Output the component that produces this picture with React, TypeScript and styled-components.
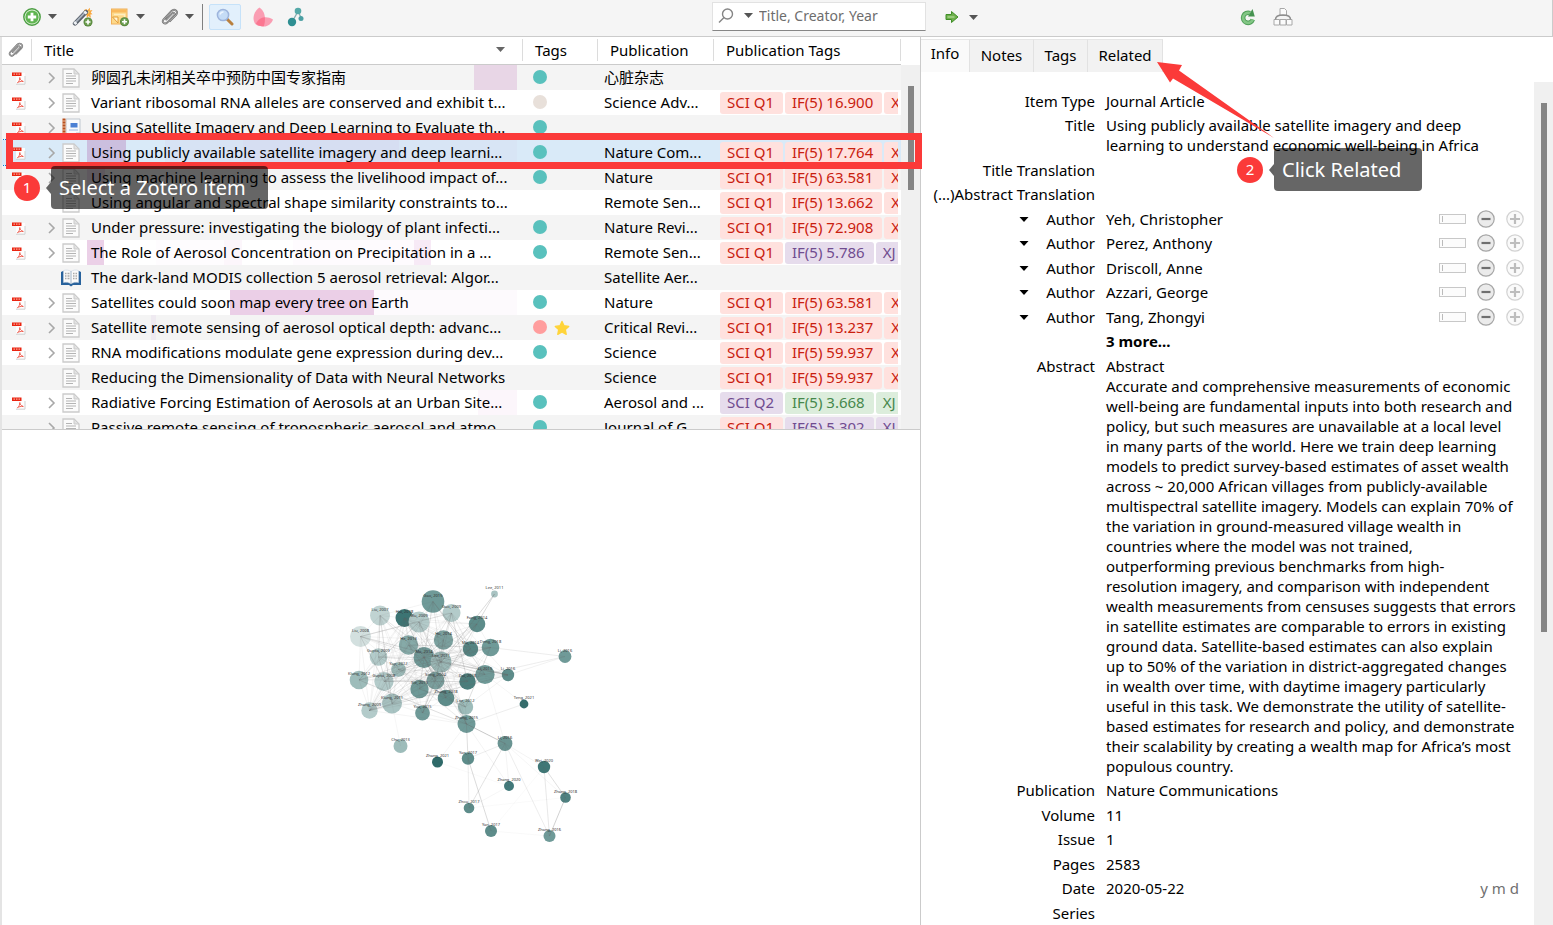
import React from 'react';
import styled, { createGlobalStyle, css } from 'styled-components';

const RED = '#fb3a39';

const Global = createGlobalStyle`
  *, *::before, *::after { box-sizing: border-box; }
  html, body, #root { height: 100%; }
  body {
    margin: 0;
    background: #fff;
    color: #000;
    font-family: "Noto Sans", "Noto Sans CJK SC", sans-serif;
    font-size: 15px;
    line-height: 20px;
  }
  button, input { font: inherit; color: inherit; }
  button { border: 0; padding: 0; background: none; }
  svg { display: block; flex: none; }
`;

/* ---------- page frame ---------- */

const Page = styled.div`
  position: relative;
  display: flex;
  flex-direction: column;
  height: 100vh;
  overflow: hidden;
`;

const Toolbar = styled.header`
  display: grid;
  grid-template-columns: minmax(0, 926fr) minmax(0, 626fr);
  flex: none;
  height: 37px;
  background: #f5f5f5;
  border-bottom: 1px solid #cbcbcb;
  border-right: 1px solid #cbcbcb;
`;

const ItemTools = styled.div`
  display: flex;
  align-items: center;
  padding: 0 0 3px 22px;
`;

const PaneTools = styled.div`
  display: flex;
  align-items: center;
  gap: 10px;
  padding: 0 259px 2px 19px;
`;

const ToolButton = styled.button<{ $gap?: number; $active?: boolean }>`
  display: flex;
  align-items: center;
  gap: 6px;
  margin-right: ${(p) => p.$gap ?? 0}px;
  ${(p) =>
    p.$active &&
    css`
      width: 32px;
      height: 26px;
      justify-content: center;
      background: #e2f0fc;
      border: 1px solid #c6e2f9;
      border-radius: 2px;
    `}
`;

const Divider = styled.span`
  width: 1px;
  height: 26px;
  margin-right: 6px;
  background: #808080;
`;

const SearchBox = styled.label`
  display: flex;
  align-items: center;
  gap: 10px;
  width: 214px;
  height: 29px;
  margin-left: auto;
  padding: 0 5px 2px;
  background: #fff;
  border: 1px solid #e2e2e2;
  border-bottom: 1px solid #868686;
`;

const SearchInput = styled.input`
  flex: 1;
  min-width: 0;
  padding: 0;
  margin-left: -4px;
  border: 0;
  outline: 0;
  background: none;
  font-size: 14px;
  &::placeholder { color: #6d6d6d; opacity: 1; }
`;

const Spacer = styled.span`
  flex: 1;
`;

const Panes = styled.div`
  display: grid;
  grid-template-columns: minmax(0, 921fr) minmax(0, 632fr);
  grid-template-rows: minmax(0, 1fr);
  flex: 1;
  min-height: 0;
`;

const LeftPane = styled.main`
  display: flex;
  flex-direction: column;
  border-left: 2px solid #e4e4e4;
  border-right: 1px solid #cbcbcb;
`;

const RightPane = styled.aside`
  display: flex;
  flex-direction: column;
`;

/* ---------- item list ---------- */

const ListArea = styled.section`
  display: flex;
  flex: none;
  height: 393px;
  overflow: hidden;
  border-bottom: 1px solid #cbcbcb;
`;

const Table = styled.table`
  flex: 1;
  min-width: 0;
  width: 100%;
  height: max-content;
  table-layout: fixed;
  border-collapse: separate;
  border-spacing: 0;
`;

const Head = styled.th<{ $width?: number; $pad: number }>`
  width: ${(p) => (p.$width ? `${p.$width}px` : 'auto')};
  height: 28px;
  padding: 0 0 2px ${(p) => p.$pad}px;
  font-weight: 400;
  text-align: left;
  white-space: nowrap;
  border-bottom: 1px solid #cbcbcb;
  background: linear-gradient(#dcdcdc, #dcdcdc) right 2px / 1px 22px no-repeat;
`;

const HeadLabel = styled.span`
  display: flex;
  align-items: center;
  justify-content: space-between;
  padding-right: 18px;
`;

const Row = styled.tr<{ $selected?: boolean }>`
  height: 25px;
  &:nth-child(odd) { background: #f4f4f4; }
  ${(p) =>
    p.$selected &&
    css`
      background: #d9eaf8;
      outline: 1px dotted #0078d7;
    `}
`;

const Cell = styled.td<{ $pad: number; $text?: boolean }>`
  height: 25px;
  padding: 0 0 ${(p) => (p.$text ? 2 : 0)}px ${(p) => p.$pad}px;
  overflow: hidden;
  white-space: nowrap;
`;

const TitleLine = styled.div`
  display: flex;
  align-items: center;
  height: 25px;
  padding-right: 5px;
`;

const Twisty = styled.span`
  display: flex;
  width: 13px;
`;

const IconSlot = styled.span`
  display: flex;
  justify-content: center;
  width: 20px;
  margin-right: 6px;
`;

type Heat = [number, number, string];

const stops = (heat: Heat[]) =>
  heat
    .map(([a, b, c]) => `transparent ${a}px, ${c} ${a}px, ${c} ${b}px, transparent ${b}px`)
    .join(', ');

const TitleText = styled.span<{ $heat?: Heat[] }>`
  flex: 1;
  min-width: 0;
  height: 25px;
  padding-left: 4px;
  line-height: 24px;
  overflow: hidden;
  ${(p) => p.$heat && `background: linear-gradient(to right, ${stops(p.$heat)});`}
`;

const TagLine = styled.div`
  display: flex;
  align-items: center;
  gap: 7px;
`;

const Dot = styled.span<{ $color: string }>`
  width: 14px;
  height: 14px;
  margin-bottom: 2px;
  border-radius: 50%;
  background: ${(p) => p.$color};
`;

const RankLine = styled.div`
  display: flex;
  gap: 2px;
  margin-right: 3px;
  overflow: hidden;
`;

const rankTones = {
  red: ['#c9200f', '#ffe1de'],
  purple: ['#704c90', '#e6dcec'],
  green: ['#46884c', '#dceddc'],
};
type Tone = keyof typeof rankTones;

const Rank = styled.span<{ $tone: Tone }>`
  flex: none;
  height: 22px;
  padding: 0 9px 0 7px;
  border-radius: 3px;
  line-height: 21px;
  color: ${(p) => rankTones[p.$tone][0]};
  background: ${(p) => rankTones[p.$tone][1]};
`;

const Scrollbar = styled.div<{ $top: number; $thumbTop: number; $wide: number }>`
  flex: none;
  width: ${(p) => p.$wide}px;
  margin-top: ${(p) => p.$top}px;
  padding: ${(p) => p.$thumbTop}px 6px 0 7px;
  background: #f0f0f0;
`;

const Thumb = styled.div<{ $size: number }>`
  width: 6px;
  height: ${(p) => p.$size}px;
  background: #858585;
`;

const GraphPane = styled.section`
  display: flex;
  flex: 1;
  min-height: 0;
  justify-content: center;
  align-items: flex-start;
  padding-top: 145px;
`;

/* ---------- item details ---------- */

const Tabs = styled.div`
  display: flex;
  flex: none;
  height: 35px;
  padding-top: 2px;
`;

const Tab = styled.button<{ $width: number; $active?: boolean }>`
  width: ${(p) => p.$width}px;
  padding-bottom: ${(p) => (p.$active ? 6 : 2)}px;
  background: ${(p) => (p.$active ? '#fafafa' : '#f2f2f2')};
  border-top: 1px solid #e6e6e6;
  border-right: 1px solid #e2e2e2;
`;

const Details = styled.div`
  display: flex;
  flex: 1;
  min-height: 0;
  padding-top: 10px;
`;

const Fields = styled.dl`
  display: flex;
  flex: 1;
  flex-direction: column;
  min-width: 0;
  margin: 0;
  padding: 9px 10px 0 0;
  overflow: hidden;
`;

const Field = styled.div`
  display: flex;
  flex: none;
  margin-bottom: 4px;
  &:nth-child(even) { margin-bottom: 5px; }
`;

const FieldLabel = styled.dt`
  display: flex;
  flex: none;
  align-items: center;
  justify-content: flex-end;
  gap: 17px;
  width: 174px;
  height: 20px;
  margin-right: 11px;
  white-space: nowrap;
`;

const FieldValue = styled.dd<{ $bold?: boolean }>`
  display: flex;
  flex: 1;
  justify-content: space-between;
  margin: 0;
  white-space: nowrap;
  font-weight: ${(p) => (p.$bold ? 700 : 400)};
`;

const RowActions = styled.span`
  display: flex;
  align-items: center;
  gap: 11px;
`;

const NameMode = styled.button`
  width: 27px;
  height: 10px;
  border: 1px solid #c8c8c8;
  background: linear-gradient(#bbb, #bbb) 2px 1px / 1px 6px no-repeat #fcfcfc;
`;

const DateParts = styled.span`
  padding-right: 5px;
  color: #707070;
`;

/* ---------- annotations ---------- */

const SelectionFrame = styled.div`
  position: absolute;
  top: 133px;
  left: 6px;
  width: 916px;
  height: 36px;
  border: 7px solid ${RED};
`;

const Callout = styled.div<{ $x: number; $y: number }>`
  position: absolute;
  left: ${(p) => p.$x}px;
  top: ${(p) => p.$y}px;
  display: flex;
  align-items: center;
`;

const Badge = styled.span`
  width: 26px;
  height: 26px;
  margin-right: 6px;
  border-radius: 50%;
  background: ${RED};
  color: #fff;
  line-height: 25px;
  text-align: center;
`;

const Pointer = styled.span`
  border: 6px solid transparent;
  border-left: 0;
  border-right: 5px solid rgba(60, 60, 60, 0.8);
`;

const CalloutText = styled.span<{ $wide: number }>`
  width: ${(p) => p.$wide}px;
  padding-left: 8px;
  border-radius: 4px;
  background: rgba(0, 0, 0, 0.6);
  color: #fff;
  font-size: 20px;
  line-height: 43px;
  white-space: nowrap;
`;

const ArrowLayer = styled.svg`
  position: absolute;
  left: 1156px;
  top: 60px;
`;

/* ---------- icons ---------- */

const Caret = ({ color = '#555', w = 9 }: { color?: string; w?: number }) => (
  <svg width={w} height="5" viewBox="0 0 9 5"><path d="M0 0h9L4.500 5z" fill={color} /></svg>
);

const PlusDisc = ({ x, y, r }: { x: number; y: number; r: number }) => (
  <g transform={`translate(${x} ${y})`}>
    <circle r={r} fill="#4f7f35" />
    <circle r={r - 0.8} fill="#6b9c4e" />
    <path d={`M${-r * 0.55} 0h${r * 1.1}M0 ${-r * 0.55}v${r * 1.1}`} stroke="#fff" strokeWidth={r * 0.36} />
  </g>
);

const NewItemIcon = () => (
  <svg width="20" height="20" viewBox="0 0 20 20">
    <circle cx="10" cy="10" r="8.200" fill="#dff0d8" stroke="#4b9e42" strokeWidth="1.400" />
    <circle cx="10" cy="10" r="6.600" fill="#5fb550" />
    <path d="M10 5.800v8.400M5.800 10h8.400" stroke="#fff" strokeWidth="2.800" />
  </svg>
);

const WandIcon = () => (
  <svg width="22" height="20" viewBox="0 0 22 20">
    <path d="M12 3l2.500-1 .7 1.500L18 .8l-.2 2.700 2.700-.5-1.800 2.500 1.800 1.800-2.200.2.700 3.500-2.500-2-1.500 2-.5-3-2-1.500z" fill="#f9a63c" />
    <path d="M15 3.500l2.500 1-1 2.500z" fill="#ffe27a" />
    <path d="M3 16.500L14 5" stroke="#59616b" strokeWidth="4.400" strokeLinecap="round" />
    <path d="M3 15.800L13.500 4.800" stroke="#aab3be" strokeWidth="1.800" />
    <path d="M2.400 17l1.800-1.900M12.600 6.500l1.700-1.800" stroke="#eef1f5" strokeWidth="3.200" />
    <PlusDisc x={16} y={15} r={4.500} />
  </svg>
);

const NoteIcon = () => (
  <svg width="20" height="20" viewBox="0 0 20 20">
    <rect x="1.500" y="2" width="15.500" height="15" fill="#fdd98a" stroke="#f0b05a" />
    <path d="M2 2.500h14.500v3H2z" fill="#f9b95c" />
    <path d="M2.500 10h5.500v6z" fill="#fff6d8" stroke="#e39b35" />
    <path d="M4 7.500h10.500v7" fill="none" stroke="#feedc0" strokeWidth="1.500" />
    <PlusDisc x={14.500} y={14.800} r={4.500} />
  </svg>
);

const CLIP = 'M5.200 11.500l6-6.200c1.500-1.400 3.300.3 2 1.800l-7 7.400c-2.600 2.500-5.900-.5-3.600-3.200L10.500 3c3-3 7.400.4 4.600 3.900L9 13.200';

const ClipIcon = ({ size = 18 }: { size?: number }) => (
  <svg width={size} height={size} viewBox="0 0 18 18" fill="none" strokeLinecap="round">
    <path d={CLIP} stroke="#6a6a6a" strokeWidth="1.800" />
    <path d={CLIP} stroke="#d6d6d6" strokeWidth="0.600" />
  </svg>
);

const MagnifierIcon = () => (
  <svg width="18" height="18" viewBox="0 0 18 18">
    <path d="M11 11l5 5" stroke="#b9803f" strokeWidth="3" strokeLinecap="round" />
    <path d="M10 10l1.500 1.500" stroke="#777" strokeWidth="2" />
    <circle cx="7" cy="7" r="5.600" fill="#c5dcf6" stroke="#9db4dc" strokeWidth="1.500" />
    <path d="M4 6.500c.5-1.600 1.800-2.600 3.500-2.500" stroke="#eef6ff" strokeWidth="1.500" fill="none" />
  </svg>
);

const PetalsIcon = () => (
  <svg width="22" height="22" viewBox="0 0 22 22">
    <path d="M7.500 1.500c4.500 3 7 9 4.500 18.500C3.500 21 1.500 16.500 1.500 12c0-4.500 3-8.500 6-10.500z" fill="#fb93ab" opacity=".9" />
    <path d="M21 13.500c-1.500 4-5 7.500-10.500 7-3-.4-5.500-1.500-6.500-3 3-6 10-8.500 17-4z" fill="#fb93ab" opacity=".9" />
    <path d="M4 17.500c2-4 5-6 8.800-6.300.4 2.800 0 5.400-1 9-3 .3-6.100-.7-7.800-2.700z" fill="#fb7690" />
  </svg>
);

const NetworkIcon = () => (
  <svg width="18" height="20" viewBox="0 0 18 20">
    <path d="M5 15L11 4.500l3.500 7" fill="none" stroke="#85aeb0" strokeWidth="1.300" />
    <circle cx="5" cy="15" r="4.200" fill="#2f8f92" />
    <circle cx="11" cy="4" r="3.300" fill="#55a9a8" />
    <circle cx="14" cy="11.500" r="2.500" fill="#4b9fa3" />
  </svg>
);

const SearchGlyph = () => (
  <svg width="16" height="16" viewBox="0 0 16 16" fill="none" stroke="#858585" strokeWidth="1.400">
    <circle cx="9.500" cy="6" r="5" /><path d="M6 9.500L1 14.500" />
  </svg>
);

const GoIcon = () => (
  <svg width="14" height="14" viewBox="0 0 14 14">
    <path d="M1 4.500h5.500V1.500L13 7l-6.500 5.500v-3H1z" fill="#6fb04c" stroke="#3f8f27" />
    <path d="M2.500 7h7" stroke="#a6d58b" strokeWidth="1.500" />
  </svg>
);

const SyncIcon = () => (
  <svg width="16" height="18" viewBox="0 0 16 18" fill="none">
    <path d="M12.800 11.500A5 5 0 1 1 10 5.200" stroke="#4f9e58" strokeWidth="4.600" />
    <path d="M12.800 11.500A5 5 0 1 1 10 5.200" stroke="#82c684" strokeWidth="2.600" />
    <path d="M12.500 1l2.300 7.500H8z" fill="#469350" />
  </svg>
);

const LibraryIcon = () => (
  <svg width="20" height="20" viewBox="0 0 20 20" fill="#fbfbfb" stroke="#a8a8a8">
    <path d="M7 1.500h4.500l2 2v5H7zM1 12.500h5.500V18H1zM7 12.500h6V18H7zM13.500 12.500H19V18h-5.500z" />
    <path d="M2.500 12.500c0-3 3-4.500 7.500-4.500s7.500 1.500 7.500 4.500" fill="none" stroke="#8d8d8d" strokeWidth="1.500" />
  </svg>
);

const PdfIcon = () => (
  <svg width="14" height="16" viewBox="0 0 14 16">
    <path d="M4 3h9v11H4z" fill="#fdfdfd" />
    <path d="M13 6v8.200H4" fill="none" stroke="#cfcfcf" />
    <path d="M0 2.500h9.500V6H0z" fill="#ea2410" />
    <path d="M1.500 4.200h1.500M4 4.200h1.500M6.500 4.200H8" stroke="#f9a79b" strokeWidth="1.200" />
    <path d="M7.800 7.500c.2 1.800 1 3 3.500 4-2.500-.3-4.500.2-5.800 1.200 1.600-1.300 2.300-3 2.300-5.200z" fill="none" stroke="#ee5244" strokeWidth=".9" />
  </svg>
);

const Chevron = () => (
  <svg width="8" height="12" viewBox="0 0 8 12"><path d="M1 1l5 5-5 5" fill="none" stroke="#a8a8a8" strokeWidth="1.600" /></svg>
);

const DocIcon = () => (
  <svg width="18" height="20" viewBox="0 0 18 20">
    <path d="M1 1h11l5 5v13H1z" fill="#fbfbfb" stroke="#cbcbcb" strokeWidth="1.300" />
    <path d="M12 1v5h5z" fill="#e2e2e2" stroke="#cbcbcb" />
    <path d="M4 5.500h6M4 8h10M4 10.500h10M4 13h10M4 15.500h7" stroke="#b4b4b4" />
  </svg>
);

const NotebookIcon = () => (
  <svg width="19" height="20" viewBox="0 0 19 20">
    <path d="M4 1h14v14l-4 4H4z" fill="#f8fafc" stroke="#c0c7cf" />
    <path d="M14 19v-4h4" fill="#e1e6ec" stroke="#c0c7cf" />
    <path d="M.5.500h3v19h-3z" fill="#b9501e" />
    <path d="M0 3h4.500M0 6h4.500M0 9h4.500M0 12h4.500M0 15h4.500" stroke="#ecc2a4" />
    <path d="M8.500 5h7v4.500h-7z" fill="#4a80d4" />
    <path d="M7 12h9" stroke="#98b8e4" />
  </svg>
);

const BookIcon = () => (
  <svg width="20" height="18" viewBox="0 0 20 18">
    <path d="M0 3l2-1h16l2 1v13h-8l-2 1.500L8 16H0z" fill="#28629c" />
    <path d="M2.500 1.500c3-.8 5.500-.5 7.500 1 2-1.500 4.500-1.800 7.500-1v12c-3-.6-5.500-.2-7.500 1.300-2-1.500-4.500-1.900-7.500-1.300z" fill="#fafafa" stroke="#c8d4e0" strokeWidth=".6" />
    <path d="M4 4.500h1.500M6.500 4.500H8.500M4 7h1.500M6.500 7h2M4 9.500h1.500M6.500 9.500h2M12 4.500h1.500M14.500 4.500H16M12 7h1.500M14.500 7H16M12 9.500h1.500M14.500 9.500H16" stroke="#aaa" strokeWidth="1.300" />
    <path d="M10 2.500v12.300" stroke="#a0b4c8" />
  </svg>
);

const StarIcon = () => (
  <svg width="16" height="16" viewBox="0 0 16 16">
    <path d="M8 1.500l2 4.300 4.700.6-3.400 3.200.9 4.700L8 12l-4.200 2.300.9-4.700L1.300 6.400 6 5.800z" fill="#ffd43a" stroke="#ffd43a" strokeWidth="1.400" strokeLinejoin="round" />
  </svg>
);

const RoundIcon = ({ plus }: { plus?: boolean }) => (
  <svg width="18" height="18" viewBox="0 0 18 18">
    <circle cx="9" cy="9" r="8.200" fill={plus ? '#fafafa' : '#ebebeb'} stroke={plus ? '#d2d2d2' : '#a6a6a6'} strokeWidth="1.200" />
    <path d={plus ? 'M4 9h10M9 4v10' : 'M4.500 9h9'} stroke={plus ? '#bdbdbd' : '#6f6f6f'} strokeWidth="2.200" />
  </svg>
);

/* ---------- data ---------- */

type Item = {
  title: string;
  kind?: 'doc' | 'notebook' | 'book';
  pdf?: boolean;
  open?: boolean;
  dot?: string;
  star?: boolean;
  pub?: string;
  ranks?: [string, Tone][];
  heat?: Heat[];
  selected?: boolean;
};

const TEAL = '#59c1bd';
const q1 = (factor: string): [string, Tone][] => [['SCI Q1', 'red'], [`IF(5) ${factor}`, 'red'], ['XJ', 'red']];

const items: Item[] = [
  { title: '卵圆孔未闭相关卒中预防中国专家指南', pdf: true, open: true, dot: TEAL, pub: '心脏杂志', heat: [[387, 430, '#e8d6e6']] },
  { title: 'Variant ribosomal RNA alleles are conserved and exhibit t...', pdf: true, open: true, dot: '#e8e0da', pub: 'Science Adv...', ranks: q1('16.900') },
  { title: 'Using Satellite Imagery and Deep Learning to Evaluate th...', kind: 'notebook', pdf: true, open: true, dot: TEAL },
  { title: 'Using publicly available satellite imagery and deep learni...', pdf: true, open: true, dot: TEAL, pub: 'Nature Com...', ranks: q1('17.764'), selected: true, heat: [[0, 39, '#cbbfdf'], [78, 156, '#d7e3f4'], [156, 312, '#d6def2'], [312, 430, '#d8e5f5']] },
  { title: 'Using machine learning to assess the livelihood impact of...', pdf: true, open: true, dot: TEAL, pub: 'Nature', ranks: q1('63.581'), heat: [[0, 18, '#ecdcec']] },
  { title: 'Using angular and spectral shape similarity constraints to...', pub: 'Remote Sen...', ranks: q1('13.662') },
  { title: 'Under pressure: investigating the biology of plant infecti...', pdf: true, open: true, dot: TEAL, pub: 'Nature Revi...', ranks: q1('72.908') },
  { title: 'The Role of Aerosol Concentration on Precipitation in a ...', pdf: true, open: true, dot: TEAL, pub: 'Remote Sen...', ranks: [['SCI Q1', 'red'], ['IF(5) 5.786', 'purple'], ['XJ', 'purple']], heat: [[0, 17, '#ebd0e7'], [69, 137, '#fefcfe'], [137, 155, '#fcf6fb'], [206, 327, '#fefbfe'], [327, 344, '#f7eaf6']] },
  { title: 'The dark-land MODIS collection 5 aerosol retrieval: Algor...', kind: 'book', pub: 'Satellite Aer...' },
  { title: 'Satellites could soon map every tree on Earth', pdf: true, open: true, dot: TEAL, pub: 'Nature', ranks: q1('63.581'), heat: [[143, 287, '#ebcfe7'], [287, 430, '#fdfafd']] },
  { title: 'Satellite remote sensing of aerosol optical depth: advanc...', pdf: true, open: true, dot: '#ff9d9d', star: true, pub: 'Critical Revi...', ranks: q1('13.237'), heat: [[64, 69, '#efeaf1']] },
  { title: 'RNA modifications modulate gene expression during dev...', pdf: true, open: true, dot: TEAL, pub: 'Science', ranks: q1('59.937') },
  { title: 'Reducing the Dimensionality of Data with Neural Networks', pub: 'Science', ranks: q1('59.937') },
  { title: 'Radiative Forcing Estimation of Aerosols at an Urban Site...', pdf: true, open: true, dot: TEAL, pub: 'Aerosol and ...', ranks: [['SCI Q2', 'purple'], ['IF(5) 3.668', 'green'], ['XJ', 'green']], heat: [[391, 430, '#fcf6fb']] },
  { title: 'Passive remote sensing of tropospheric aerosol and atmo...', open: true, dot: TEAL, pub: 'Journal of G...', ranks: [['SCI Q1', 'red'], ['IF(5) 5.302', 'purple'], ['XJ', 'purple']] },
];

const authors = ['Yeh, Christopher', 'Perez, Anthony', 'Driscoll, Anne', 'Azzari, George', 'Tang, Zhongyi'];

const abstractLines = [
  'Abstract',
  'Accurate and comprehensive measurements of economic',
  'well-being are fundamental inputs into both research and',
  'policy, but such measures are unavailable at a local level',
  'in many parts of the world. Here we train deep learning',
  'models to predict survey-based estimates of asset wealth',
  'across ~ 20,000 African villages from publicly-available',
  'multispectral satellite imagery. Models can explain 70% of',
  'the variation in ground-measured village wealth in',
  'countries where the model was not trained,',
  'outperforming previous benchmarks from high-',
  'resolution imagery, and comparison with independent',
  'wealth measurements from censuses suggests that errors',
  'in satellite estimates are comparable to errors in existing',
  'ground data. Satellite-based estimates can also explain',
  'up to 50% of the variation in district-aggregated changes',
  'in wealth over time, with daytime imagery particularly',
  'useful in this task. We demonstrate the utility of satellite-',
  'based estimates for research and policy, and demonstrate',
  'their scalability by creating a wealth map for Africa’s most',
  'populous country.',
];

const titleLines = ['Using publicly available satellite imagery and deep', 'learning to understand economic well-being in Africa'];

const Lines = ({ lines }: { lines: string[] }) => (
  <span>{lines.map((l, i) => <React.Fragment key={i}>{i > 0 && <br />}{l}</React.Fragment>)}</span>
);

/* x, y, radius, fill, label; the first CORE nodes form the dense cluster */
type GraphNode = [number, number, number, string, string];
const CORE = 28;
const nodes: GraphNode[] = [
  [380, 615.5, 10, '#c0d3d2', 'Liu, 2007'], [360.5, 636.5, 10.5, '#d3e0df', 'Liu, 2008'],
  [433, 601.5, 11.3, '#6f9a98', 'Gao, 2015'], [404.5, 618, 9, '#3c7473', 'Hai, 2018'],
  [419, 622, 10.5, '#b3cbca', 'Wu, 2009'], [451.5, 613, 9, '#b3cbca', 'Guo, 2009'],
  [477, 624, 8.3, '#5d8c8a', 'Fang, 2014'], [408.5, 645, 9.7, '#86aaa8', 'He, 2013'],
  [443.5, 640, 9.7, '#7ba19f', 'Hu, 2014'], [470.5, 649, 7.7, '#548583', 'Ma, 2014'],
  [490.5, 647.5, 8.8, '#6f9a98', 'Deng, 2018'], [378.5, 657, 8.8, '#b3cbca', 'Gupta, 2009'],
  [424, 657.5, 10.5, '#6f9a98', 'Ma, 2014'], [441, 662, 10.5, '#9dbcba', 'Lee, 2011'],
  [398.5, 669.5, 7.3, '#9dbcba', 'Yap, 2012'], [359, 680, 9.3, '#9dbcba', 'Klung, 2012'],
  [384, 681.5, 9.6, '#b3cbca', 'Gupta, 2008'], [435.5, 680.5, 9, '#7ba19f', 'Song, 2004'],
  [419.5, 689, 9.2, '#6f9a98', 'Xie, 2015'], [467.5, 681.5, 8.2, '#4a7e7c', 'Dai, 2018'],
  [485, 674.5, 9.6, '#6f9a98', 'Li, 2015'], [446, 698, 8.3, '#5d8c8a', 'Zhang, 2018'],
  [392, 703.5, 10, '#a8c3c2', 'Klung, 2011'], [369.5, 710.5, 8.2, '#b3cbca', 'Zhang, 2009'],
  [422.5, 713, 7.4, '#6f9a98', 'You, 2015'], [465.5, 707, 7.7, '#9dbcba', 'Lee, 2012'],
  [466.5, 724, 9, '#6f9a98', 'Zhang, 2015'], [508, 675, 6.2, '#5d8c8a', 'Li, 2016'],
  [494.5, 594, 3.4, '#a8c3c2', 'Lee, 2011'], [524, 704, 4.4, '#356d6c', 'Teng, 2021'],
  [565, 656.5, 6.4, '#6f9a98', 'Li, 2016'], [400.5, 746, 7, '#9dbcba', 'Chu, 2013'],
  [437.5, 762, 5.5, '#2f6a69', 'Zhang, 2021'], [468, 758.5, 6.2, '#5d8c8a', 'Yan, 2017'],
  [505, 743.5, 7.4, '#6a9492', 'Li, 2016'], [544, 767, 6.2, '#3f7776', 'Wei, 2020'],
  [509, 786, 5, '#42797a', 'Zhang, 2020'], [565.5, 797.5, 5.3, '#4f8180', 'Zhang, 2018'],
  [469, 808, 5.3, '#5d8c8a', 'Zhou, 2017'], [491, 831, 6, '#5d8c8a', 'Yan, 2017'],
  [549.5, 836, 6, '#6f9a98', 'Zhang, 2016'],
];

/* from, to, opacity */
const outerEdges: [number, number, number][] = [
  [28, 13, 0.4], [6, 28, 0.4], [26, 34, 0.6], [26, 33, 0.35], [33, 38, 0.2], [33, 39, 0.4], [34, 38, 0.3], [34, 40, 0.2],
  [34, 35, 0.12], [35, 40, 0.25], [35, 37, 0.35], [37, 40, 0.5], [33, 34, 0.2], [34, 36, 0.12], [34, 37, 0.1],
  [26, 29, 0.2], [27, 30, 0.15], [20, 30, 0.2], [10, 30, 0.2], [31, 22, 0.1], [32, 26, 0.1], [32, 36, 0.06], [38, 37, 0.06],
  [20, 29, 0.1], [38, 36, 0.1], [39, 35, 0.06], [39, 40, 0.07], [26, 36, 0.12], [13, 27, 0.2], [20, 34, 0.1],
];

const coreEdges: [number, number, number][] = [];
for (let a = 0; a < CORE; a += 1) {
  for (let b = a + 1; b < CORE; b += 1) {
    const mix = (a * 37 + b * 23 + a * b * 7) % 11;
    const hub = b === 12 || b === 13 || a === 12 || a === 13;
    if (mix < 4 || (hub && mix < 9)) coreEdges.push([a, b, mix === 0 ? 0.35 : hub ? 0.26 : 0.12]);
  }
}

const CitationGraph = () => (
  <svg width="260" height="280" viewBox="331 575 260 280" role="img" aria-label="Citation graph">
    {nodes.map(([x, y, r, fill], i) => <circle key={i} cx={x} cy={y} r={r} fill={fill} />)}
    {[...coreEdges, ...outerEdges].map(([a, b, o], i) => (
      <line key={i} x1={nodes[a][0]} y1={nodes[a][1]} x2={nodes[b][0]} y2={nodes[b][1]} stroke="#666" strokeOpacity={o} strokeWidth=".6" />
    ))}
    {nodes.map(([x, y, , , label], i) => (
      <text key={i} x={x} y={y - 5} fontSize="4" textAnchor="middle" fill="#333">{label}</text>
    ))}
  </svg>
);

/* ---------- composition ---------- */

const kindIcon = { doc: <DocIcon />, notebook: <NotebookIcon />, book: <BookIcon /> };

const ItemRow = ({ item }: { item: Item }) => (
  <Row $selected={item.selected}>
    <Cell $pad={10}>{item.pdf && <PdfIcon />}</Cell>
    <Cell $pad={16}>
      <TitleLine>
        <Twisty>{item.open && <Chevron />}</Twisty>
        <IconSlot>{kindIcon[item.kind ?? 'doc']}</IconSlot>
        <TitleText $heat={item.heat}>{item.title}</TitleText>
      </TitleLine>
    </Cell>
    <Cell $pad={10}>
      <TagLine>{item.dot && <Dot $color={item.dot} />}{item.star && <StarIcon />}</TagLine>
    </Cell>
    <Cell $pad={6} $text>{item.pub}</Cell>
    <Cell $pad={6}>
      <RankLine>{item.ranks?.map(([text, tone]) => <Rank key={text} $tone={tone}>{text}</Rank>)}</RankLine>
    </Cell>
  </Row>
);

const Entry = ({ label, children, bold }: { label?: string; children?: React.ReactNode; bold?: boolean }) => (
  <Field><FieldLabel>{label}</FieldLabel><FieldValue $bold={bold}>{children}</FieldValue></Field>
);

export default function App() {
  return (
    <Page>
      <Global />
      <Toolbar>
        <ItemTools>
          <ToolButton $gap={15} aria-label="New item"><NewItemIcon /><Caret /></ToolButton>
          <ToolButton $gap={16} aria-label="Add by identifier"><WandIcon /></ToolButton>
          <ToolButton $gap={16} aria-label="New note"><NoteIcon /><Caret /></ToolButton>
          <ToolButton $gap={8} aria-label="Add attachment"><ClipIcon /><Caret /></ToolButton>
          <Divider />
          <ToolButton $gap={11} $active aria-label="Advanced search"><MagnifierIcon /></ToolButton>
          <ToolButton $gap={13} aria-label="Petals"><PetalsIcon /></ToolButton>
          <ToolButton aria-label="Graph view"><NetworkIcon /></ToolButton>
          <SearchBox>
            <SearchGlyph />
            <Caret />
            <SearchInput type="text" placeholder="Title, Creator, Year" aria-label="Search items" />
          </SearchBox>
        </ItemTools>
        <PaneTools>
          <ToolButton aria-label="Locate"><GoIcon /></ToolButton>
          <ToolButton aria-label="Locate menu"><Caret /></ToolButton>
          <Spacer />
          <ToolButton $gap={7} aria-label="Sync"><SyncIcon /></ToolButton>
          <ToolButton aria-label="Library structure"><LibraryIcon /></ToolButton>
        </PaneTools>
      </Toolbar>

      <Panes>
        <LeftPane>
          <ListArea>
            <Table>
              <thead>
                <tr>
                  <Head $width={30} $pad={6} aria-label="Attachment"><ClipIcon size={16} /></Head>
                  <Head $pad={12}><HeadLabel>Title<Caret color="#666" /></HeadLabel></Head>
                  <Head $width={75} $pad={12}>Tags</Head>
                  <Head $width={116} $pad={12}>Publication</Head>
                  <Head $width={187} $pad={12}>Publication Tags</Head>
                </tr>
              </thead>
              <tbody>{items.map((item) => <ItemRow key={item.title} item={item} />)}</tbody>
            </Table>
            <Scrollbar $top={28} $thumbTop={21} $wide={19}><Thumb $size={104} /></Scrollbar>
          </ListArea>
          <GraphPane><CitationGraph /></GraphPane>
        </LeftPane>

        <RightPane>
          <Tabs role="tablist">
            <Tab $width={49} $active role="tab" aria-selected>Info</Tab>
            <Tab $width={64} role="tab">Notes</Tab>
            <Tab $width={54} role="tab">Tags</Tab>
            <Tab $width={75} role="tab">Related</Tab>
          </Tabs>
          <Details>
            <Fields>
              <Entry label="Item Type">Journal Article</Entry>
              <Entry label="Title"><Lines lines={titleLines} /></Entry>
              <Entry label="Title Translation" />
              <Entry label="(...)Abstract Translation" />
              {authors.map((name) => (
                <Field key={name}>
                  <FieldLabel><Caret color="#000" w={10} />Author</FieldLabel>
                  <FieldValue>
                    {name}
                    <RowActions>
                      <NameMode aria-label="Switch to single field" />
                      <ToolButton aria-label="Remove author"><RoundIcon /></ToolButton>
                      <ToolButton aria-label="Add author"><RoundIcon plus /></ToolButton>
                    </RowActions>
                  </FieldValue>
                </Field>
              ))}
              <Entry bold>3 more...</Entry>
              <Entry label="Abstract"><Lines lines={abstractLines} /></Entry>
              <Entry label="Publication">Nature Communications</Entry>
              <Entry label="Volume">11</Entry>
              <Entry label="Issue">1</Entry>
              <Entry label="Pages">2583</Entry>
              <Entry label="Date">2020-05-22<DateParts>y m d</DateParts></Entry>
              <Entry label="Series" />
            </Fields>
            <Scrollbar $top={0} $thumbTop={21} $wide={19}><Thumb $size={529} /></Scrollbar>
          </Details>
        </RightPane>
      </Panes>

      <SelectionFrame />
      <Callout $x={14} $y={166}><Badge>1</Badge><Pointer /><CalloutText $wide={217}>Select a Zotero item</CalloutText></Callout>
      <ArrowLayer width="120" height="80" viewBox="0 0 120 80" aria-hidden="true">
        <path d="M1 2L26 5l-3 5.500L118 78 17 18.500l-3 4z" fill={RED} />
      </ArrowLayer>
      <Callout $x={1237} $y={148}><Badge>2</Badge><Pointer /><CalloutText $wide={148}>Click Related</CalloutText></Callout>
    </Page>
  );
}
